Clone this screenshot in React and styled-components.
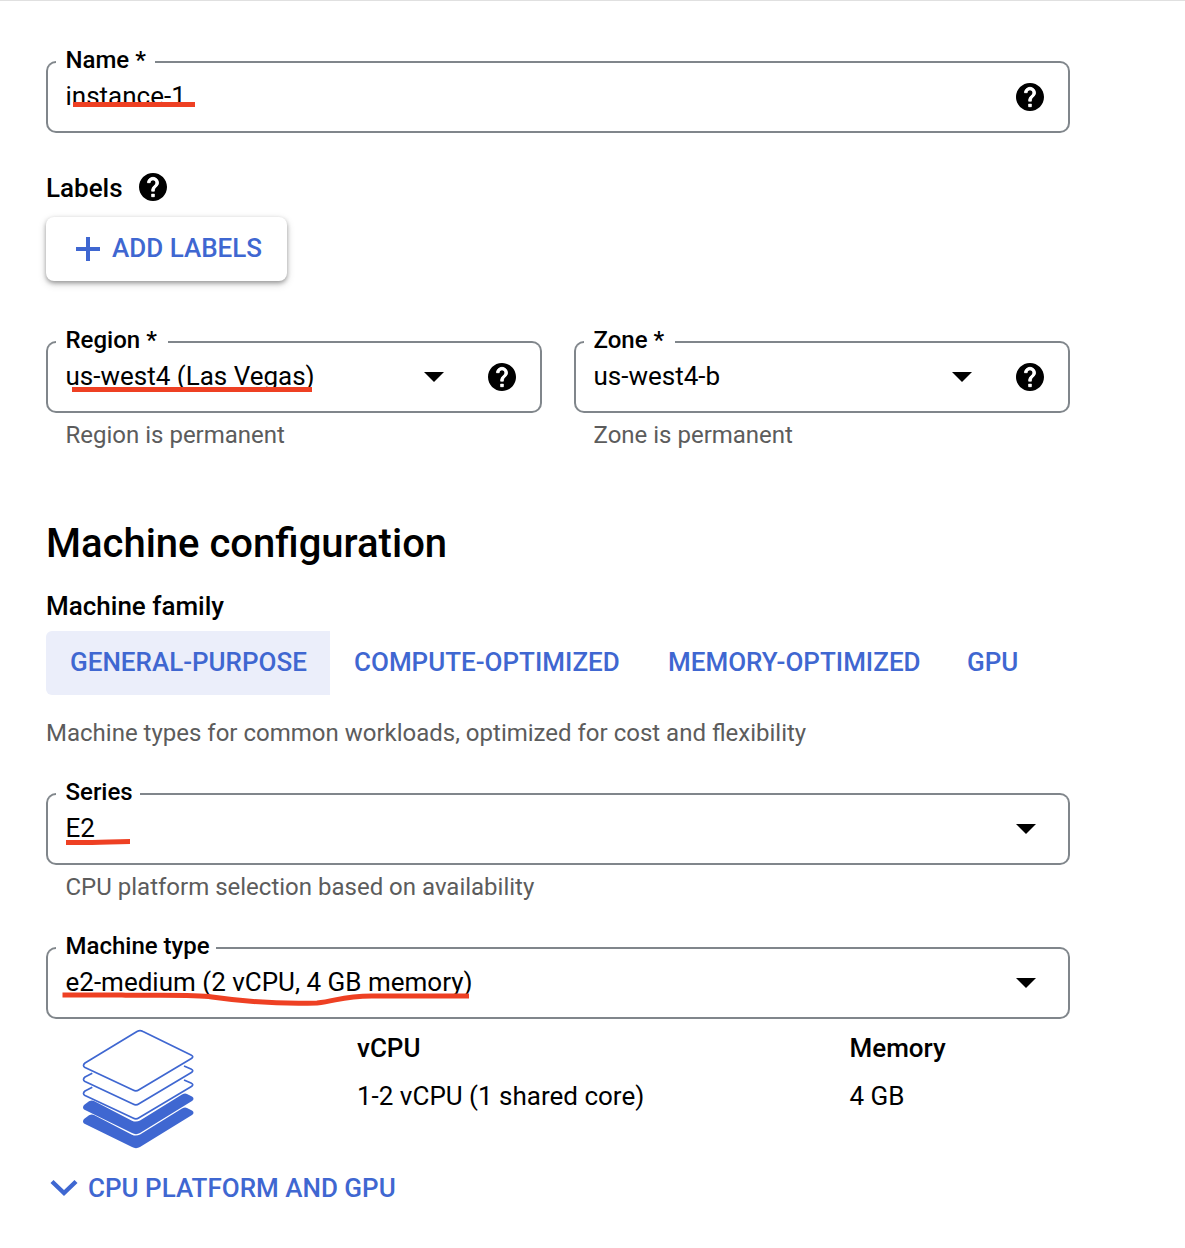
import React from 'react';
import styled, { createGlobalStyle, css } from 'styled-components';

const blue = '#3f67d1';
const red = '#ee4023';

const Global = createGlobalStyle`
  * { box-sizing: border-box; }
  body { margin: 0; background: #fff; color: #000; font-family: Roboto, 'Liberation Sans', sans-serif; }
`;

const Page = styled.main`
  height: 1248px;
  border-top: 1px solid #e0e0e0;
  padding: 60px 115px 0 46px;
  font-size: 26px;
  line-height: 32px;
  overflow: hidden;
`;

const Field = styled.div`
  display: grid;
  height: 72px;
`;
const Outline = styled.div`
  grid-area: 1 / 1;
  display: grid;
  grid-template-columns: 10px ${p => p.$notch}px 1fr;
`;
const edge = css`border: 2px solid #80868b;`;
const Leading = styled.span`${edge} border-right: 0; border-radius: 10px 0 0 10px;`;
const Trailing = styled.span`${edge} border-left: 0; border-radius: 0 10px 10px 0;`;
const Notch = styled.label`
  border-bottom: 2px solid #80868b;
  padding-left: 9.5px;
  margin-top: -17px;
  font-size: 24px;
  font-weight: 500;
  line-height: 32px;
  white-space: nowrap;
`;
const Content = styled.div`
  grid-area: 1 / 1;
  display: flex;
  align-items: center;
  padding: 0 26px 0 19.5px;
`;
const Value = styled.span`
  position: relative;
  flex: 1;
  height: 34px;
  white-space: nowrap;
`;
const Stroke = styled.svg`
  position: absolute;
  left: -3.5px;
  top: 0;
  overflow: visible;
  fill: none;
  stroke: ${red};
  stroke-width: 5px;
`;
const IconSlot = styled.span`
  display: flex;
  margin-left: ${p => p.$gap || 0}px;
  margin-right: ${p => p.$end || 0}px;
`;

const Hint = styled.div`
  padding: 6px 0 1px 19.5px;
  margin-bottom: ${p => p.$after || 0}px;
  font-size: 24px;
  color: #5c5c5c;
`;
const LabelsRow = styled.div`
  display: flex;
  align-items: center;
  gap: 16px;
  height: 32px;
  margin-top: 38px;
  font-weight: 500;
`;
const LabelsTitle = styled.span`padding-top: 2px;`;
const AddButton = styled.button`
  display: flex;
  align-items: center;
  gap: 12px;
  width: 241px;
  height: 64px;
  margin-top: 14px;
  padding: 0 0 0 30px;
  border: 0;
  border-radius: 8px;
  background: #fff;
  box-shadow: 0 2px 4px rgba(0,0,0,.32), 0 3px 8px rgba(0,0,0,.16);
  color: ${blue};
  font: 500 26px/32px Roboto, sans-serif;
  white-space: nowrap;
`;
const ButtonText = styled.span`padding-bottom: 2px;`;
const Columns = styled.div`
  display: flex;
  gap: 32px;
  margin-top: 60px;
`;
const Column = styled.div`flex: 1;`;
const Heading = styled.h2`
  margin: 68px 0 0;
  font-size: 40px;
  line-height: 48px;
  font-weight: 500;
`;
const SubHeading = styled.h3`
  margin: 22px 0 0;
  font-size: 26px;
  line-height: 32px;
  font-weight: 500;
`;
const Tabs = styled.div`
  display: flex;
  margin-top: 9px;
`;
const Tab = styled.button`
  width: ${p => p.$w}px;
  height: 64px;
  padding: 0 0 2px 24px;
  border: 0;
  border-radius: 6px 0 0 6px;
  background: ${p => (p.$active ? '#ebeefa' : 'transparent')};
  color: ${blue};
  font: 500 26px/32px Roboto, sans-serif;
  text-align: left;
  white-space: nowrap;
`;
const Description = styled.p`
  margin: 22px 0 44px;
  font-size: 24px;
  color: #5c5c5c;
`;
const Specs = styled.div`
  display: grid;
  grid-template-columns: 311px 492.5px 1fr;
  height: 120px;
  margin-top: 10px;
  padding: 0;
`;
const Illustration = styled.div`
  display: flex;
  padding-left: 36px;
`;
const Spec = styled.div`
  display: grid;
  gap: 16px;
  align-content: start;
  padding-top: 3px;
`;
const SpecName = styled.span`font-weight: 500;`;
const Expander = styled.button`
  display: flex;
  align-items: center;
  gap: 10px;
  margin-top: 23px;
  padding: 0 0 0 4px;
  border: 0;
  background: none;
  color: ${blue};
  font: 500 26px/32px Roboto, sans-serif;
`;

const Help = () => (
  <svg width="28" height="28" viewBox="2 2 20 20">
    <path d="M12 2C6.480 2 2 6.480 2 12s4.480 10 10 10 10-4.480 10-10S17.520 2 12 2zm1 17h-2v-2h2v2zm2.070-7.750l-.9.920C13.450 12.900 13 13.500 13 15h-2v-.5c0-1.100.45-2.100 1.170-2.830l1.240-1.260c.37-.36.59-.86.59-1.410 0-1.100-.9-2-2-2s-2 .9-2 2H8c0-2.210 1.790-4 4-4s4 1.790 4 4c0 .88-.36 1.680-.93 2.250z" />
    <path d="M8 9c0-2.210 1.790-4 4-4s4 1.790 4 4c0 .88-.36 1.680-.93 2.250l-.9.920C13.450 12.900 13 13.500 13 15h-2v-.5c0-1.100.45-2.100 1.170-2.830l1.240-1.260c.37-.36.59-.86.59-1.410 0-1.100-.9-2-2-2s-2 .9-2 2zM11 17h2v2h-2z" fill="#fff" stroke="#fff" strokeWidth=".35" />
  </svg>
);
const Caret = () => <svg width="20" height="10" viewBox="0 0 20 10"><path d="M0 0h20L10 10z" /></svg>;
const Plus = () => <svg width="24" height="24" viewBox="0 0 24 24" fill={blue}><path d="M10 0h4v10h10v4H14v10h-4V14H0v-4h10z" /></svg>;
const Chevron = () => <svg width="28" height="18" viewBox="0 0 28 18" fill="none" stroke={blue} strokeWidth="4.4"><path d="M2 2.500 14 14 26 2.500" /></svg>;
const Stack = () => (
  <svg width="112" height="120" viewBox="0 0 112 120" fill="none" stroke={blue} strokeWidth="1.7" strokeLinejoin="round">
    <path d="M55 2.500Q58 .9 61 2.500L109 26Q112.500 27.700 109 29.700L57 60.800Q54 62.800 51 61L3 38.500Q0 36.500 3 34Z" />
    <path d="M102 37 109 40Q112.500 41.700 109 43.700L57 74.800Q54 76.800 51 75L3 52.500Q0 50.500 3 48L10.300 44.300" />
    <path d="M102 51 109 54Q112.500 55.700 109 57.700L57 88.800Q54 90.800 51 89L3 66.500Q0 64.500 3 62L10.300 58.300" />
    <path fill={blue} stroke="none" d="M7 72.200Q10 71 12 72L50 91.700Q54 93.500 58 91.500L100 65.500Q103 64 105 65L110 67.500Q113 69.700 110 72L58 104Q54 106.300 50 104L2 80.500Q0 78.500 2 76Z" />
    <path fill={blue} stroke="none" d="M7 86.200Q10 85 12 86L50 105.700Q54 107.500 58 105.500L100 79.500Q103 78 105 79L110 81.500Q113 83.700 110 86L58 118Q54 120.300 50 118L2 94.500Q0 92.500 2 90Z" />
  </svg>
);

function OutlinedField({ label, notch, value, select, help, mark }) {
  return (
    <Field>
      <Outline $notch={notch}>
        <Leading />
        <Notch>{label}</Notch>
        <Trailing />
      </Outline>
      <Content>
        <Value>
          {value}
          {mark && <Stroke width="420" height="40"><path d={mark} /></Stroke>}
        </Value>
        {select && <IconSlot $end={help ? 0 : 8}><Caret /></IconSlot>}
        {help && <IconSlot $gap={44}><Help /></IconSlot>}
      </Content>
    </Field>
  );
}

export default function App() {
  return (
    <Page>
      <Global />
      <OutlinedField label="Name *" notch={99} value="instance-1" help mark="M11 24.500H133" />
      <LabelsRow><LabelsTitle>Labels</LabelsTitle><Help /></LabelsRow>
      <AddButton><Plus /><ButtonText>ADD LABELS</ButtonText></AddButton>
      <Columns>
        <Column>
          <OutlinedField label="Region *" notch={112} value="us-west4 (Las Vegas)" select help mark="M10 29.500H250" />
          <Hint>Region is permanent</Hint>
        </Column>
        <Column>
          <OutlinedField label="Zone *" notch={91} value="us-west4-b" select help />
          <Hint>Zone is permanent</Hint>
        </Column>
      </Columns>
      <Heading>Machine configuration</Heading>
      <SubHeading>Machine family</SubHeading>
      <Tabs>
        <Tab $w={284} $active>GENERAL-PURPOSE</Tab>
        <Tab $w={314}>COMPUTE-OPTIMIZED</Tab>
        <Tab $w={299}>MEMORY-OPTIMIZED</Tab>
        <Tab $w={100}>GPU</Tab>
      </Tabs>
      <Description>Machine types for common workloads, optimized for cost and flexibility</Description>
      <OutlinedField label="Series" notch={84} value="E2" select mark="M4 30.500H30C45 30.500 50 29.500 68 29.500" />
      <Hint $after={43}>CPU platform selection based on availability</Hint>
      <OutlinedField label="Machine type" notch={160} value="e2-medium (2 vCPU, 4 GB memory)" select mark="M0.500 29H60C80 30 130 28 150 31C185 36 225 38 255 37C275 35 280 30 310 30H407" />
      <Specs>
        <Illustration><Stack /></Illustration>
        <Spec><SpecName>vCPU</SpecName><span>1-2 vCPU (1 shared core)</span></Spec>
        <Spec><SpecName>Memory</SpecName><span>4 GB</span></Spec>
      </Specs>
      <Expander><Chevron />CPU PLATFORM AND GPU</Expander>
    </Page>
  );
}
